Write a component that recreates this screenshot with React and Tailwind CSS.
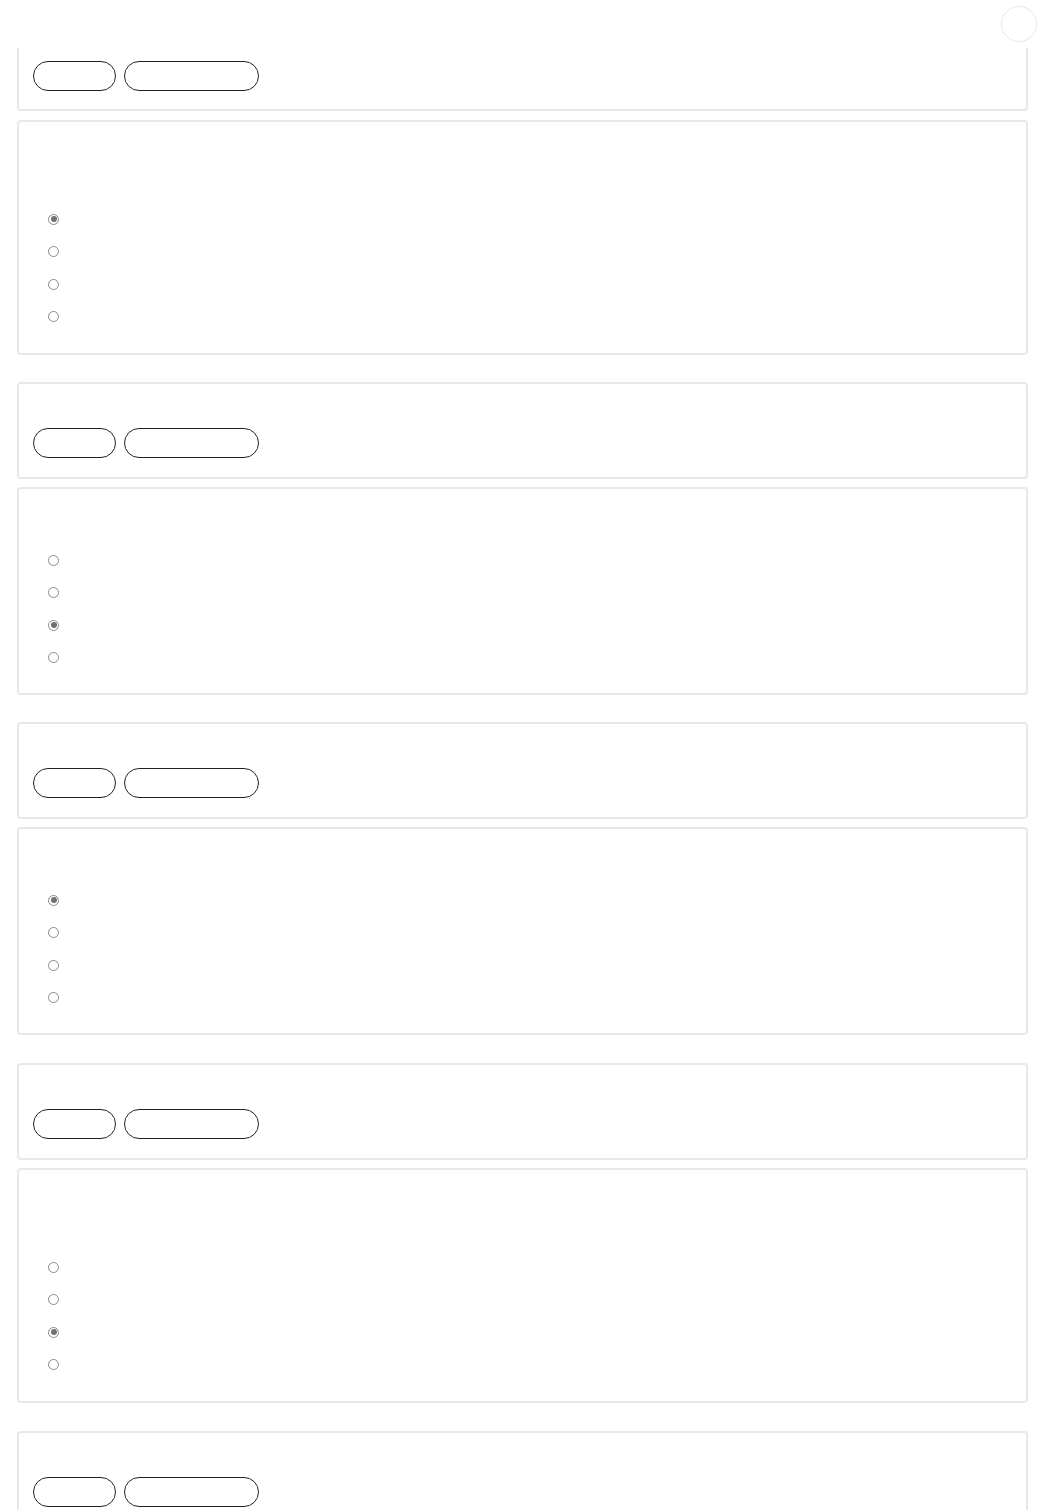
import React from "react";

function Pills() {
  return (
    <div className="flex gap-2 pl-[14px]">
      <div className="w-[83px] h-[30px] rounded-full border border-[#222]" />
      <div className="w-[135px] h-[30px] rounded-full border border-[#222]" />
    </div>
  );
}

function Radio({ checked }) {
  return (
    <div className="h-[32.5px] flex items-center pl-[29px]">
      <div className="w-[11px] h-[11px] rounded-full border border-[#8a8a8a] flex items-center justify-center bg-white">
        {checked && <div className="w-[6px] h-[6px] rounded-full bg-[#707070]" />}
      </div>
    </div>
  );
}

function PillCard() {
  return (
    <div className="border-2 border-[#e8e8e8] rounded-[4px] pt-[44px] pb-[19px]">
      <Pills />
    </div>
  );
}

function QuestionCard({ checked, tall }) {
  return (
    <div className={"border-2 border-[#e8e8e8] rounded-[4px] " + (tall ? "pt-[81px] pb-[20px]" : "pt-[55px] pb-[19px]")}>
      {[0, 1, 2, 3].map((i) => (
        <Radio key={i} checked={i === checked} />
      ))}
    </div>
  );
}

export default function App() {
  return (
    <div className="bg-white min-h-[1510px] font-['Liberation_Sans',sans-serif] overflow-hidden">
      <div className="h-12 flex justify-end items-start pt-[6px] pr-[7px]">
        <div className="w-[36px] h-[36px] rounded-full border border-[#e6e6e6] bg-white" />
      </div>
      <div className="pl-[17px] pr-[16px] flex flex-col">
        <div className="border-2 border-t-0 border-[#e8e8e8] rounded-b-[4px] pt-[13px] pb-[18px]">
          <Pills />
        </div>
        <div className="h-[9px]" />
        <QuestionCard checked={0} tall />
        <div className="h-[27px]" />
        <PillCard />
        <div className="h-[8px]" />
        <QuestionCard checked={2} />
        <div className="h-[27px]" />
        <PillCard />
        <div className="h-[8px]" />
        <QuestionCard checked={0} />
        <div className="h-[28px]" />
        <PillCard />
        <div className="h-[8px]" />
        <QuestionCard checked={2} tall />
        <div className="h-[28px]" />
        <PillCard />
      </div>
    </div>
  );
}
